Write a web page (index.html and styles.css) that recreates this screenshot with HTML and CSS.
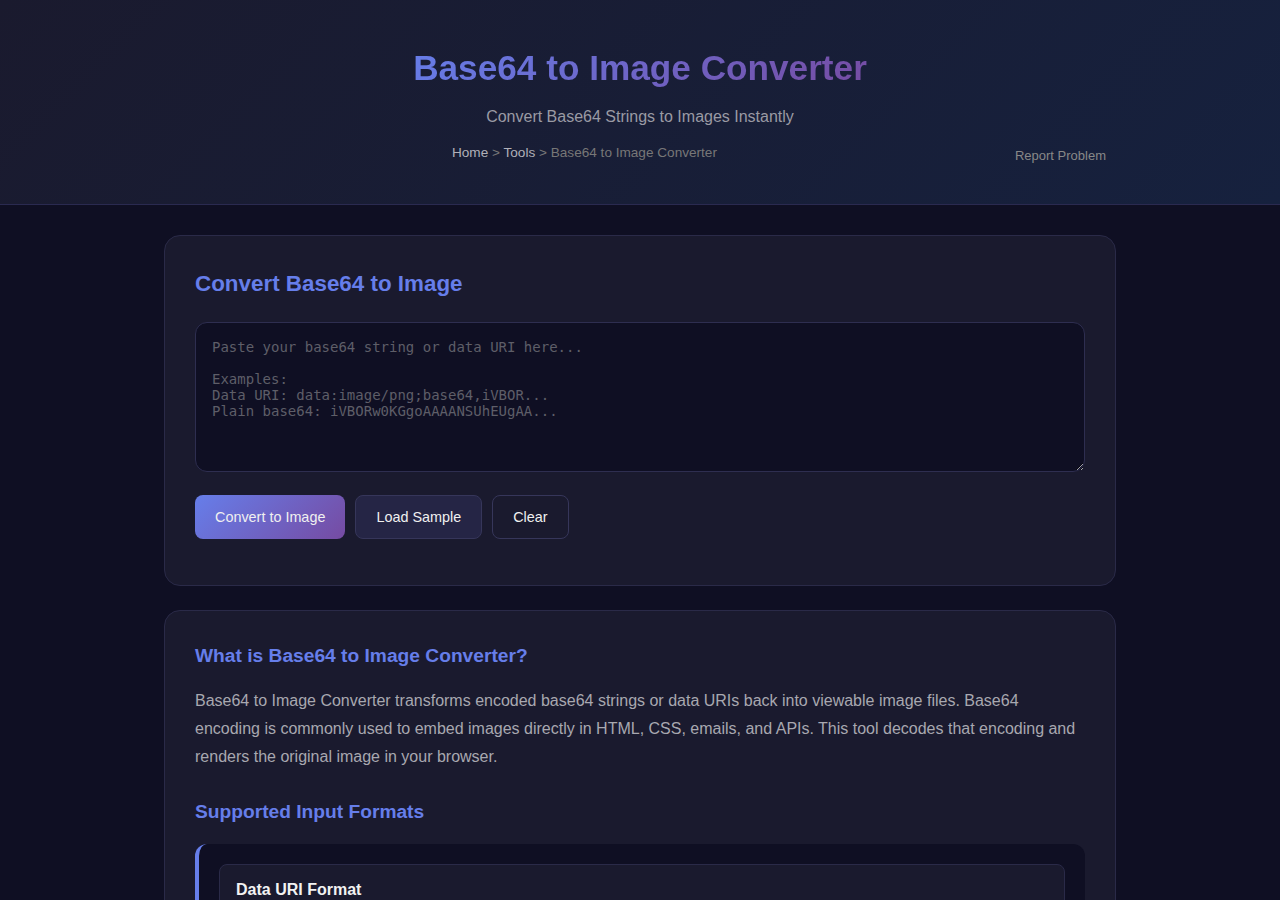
FILE: index.html
```html
<!DOCTYPE html>
<html lang="en">
<head>
  <meta charset="UTF-8">
  <meta name="viewport" content="width=device-width, initial-scale=1.0">
  <title>Base64 to Image Converter</title>
  <link rel="stylesheet" href="styles.css">
</head>
<body>
  <header class="site-header">
    <h1 class="title">Base64 to Image Converter</h1>
    <p class="subtitle">Convert Base64 Strings to Images Instantly</p>
    <div class="header-nav">
      <nav class="breadcrumb">
        <a href="#">Home</a> &gt; <a href="#">Tools</a> &gt; <span>Base64 to Image Converter</span>
      </nav>
      <a href="#" class="report-link">Report Problem</a>
    </div>
  </header>

  <main class="container">
    <section class="card">
      <h2 class="card-title">Convert Base64 to Image</h2>
      <textarea class="input-area" placeholder="Paste your base64 string or data URI here...

Examples:
Data URI: data:image/png;base64,iVBOR...
Plain base64: iVBORw0KGgoAAAANSUhEUgAA..."></textarea>
      <div class="btn-row">
        <button class="btn btn-primary">Convert to Image</button>
        <button class="btn btn-secondary">Load Sample</button>
        <button class="btn btn-outline">Clear</button>
      </div>
    </section>

    <section class="card">
      <h3 class="section-title">What is Base64 to Image Converter?</h3>
      <p class="section-text">Base64 to Image Converter transforms encoded base64 strings or data URIs back into viewable image files. Base64 encoding is commonly used to embed images directly in HTML, CSS, emails, and APIs. This tool decodes that encoding and renders the original image in your browser.</p>

      <h3 class="section-title formats-title">Supported Input Formats</h3>
      <div class="formats-box">
        <div class="format-item">
          <h4>Data URI Format</h4>
          <code>data:image/png;base64,iVBORw0KGgoAAAANSUhEUgAA...</code>
        </div>
        <div class="format-item">
          <h4>Plain Base64</h4>
          <code>iVBORw0KGgoAAAANSUhEUgAA...</code>
        </div>
      </div>
    </section>
  </main>
</body>
</html>
```

FILE: styles.css
```css
* {
  box-sizing: border-box;
}

body {
  margin: 0;
  font-family: 'Liberation Sans', Arial, sans-serif;
  background: #0f0f23;
  color: #e0e0e0;
  line-height: 1.6;
}

a {
  text-decoration: none;
}

.site-header {
  background: linear-gradient(135deg, #1a1a2e 0%, #16213e 100%);
  border-bottom: 1px solid #2a2a50;
  padding: 40px 20px 37px;
  text-align: center;
}

.title {
  margin: 0 0 8px;
  font-size: 2.2rem;
  font-weight: 700;
  background: linear-gradient(135deg, #667eea, #764ba2);
  -webkit-background-clip: text;
  background-clip: text;
  color: transparent;
  display: inline-block;
}

.subtitle {
  margin: 0 0 10px;
  font-size: 1rem;
  color: #9a9aa4;
}

.header-nav {
  max-width: 932px;
  margin: 0 auto;
  display: flex;
  align-items: center;
  gap: 20px;
}

.breadcrumb {
  flex: 1;
  text-align: center;
  font-size: 0.85rem;
  color: #777;
}

.breadcrumb a {
  color: #b0b0b8;
}

.report-link {
  font-size: 13px;
  color: #888;
  margin-top: 6px;
}

.container {
  max-width: 1000px;
  margin: 0 auto;
  padding: 30px 24px;
}

.card {
  background: #1a1a2e;
  border: 1px solid #2a2a48;
  border-radius: 16px;
  padding: 30px;
  margin-bottom: 24px;
}

.card-title {
  margin: 0 0 20px;
  font-size: 1.4rem;
  color: #667eea;
}

.input-area {
  display: block;
  width: 100%;
  height: 150px;
  padding: 16px;
  background: #0f0f23;
  border: 1px solid #2e2e50;
  border-radius: 12px;
  color: #ddd;
  font-family: 'DejaVu Sans Mono', monospace;
  font-size: 14px;
  line-height: 16px;
}

.input-area::placeholder {
  color: #5e5e68;
}

.btn-row {
  display: flex;
  gap: 10px;
  margin: 23px 0 16px;
}

.btn {
  font-family: inherit;
  font-size: 0.9rem;
  line-height: 18px;
  padding: 12px 20px;
  border-radius: 8px;
  border: 1px solid #36365a;
  color: #f0f0f0;
  cursor: pointer;
}

.btn-primary {
  background: linear-gradient(135deg, #667eea, #764ba2);
  border: none;
  padding: 13px 20px;
}

.btn-secondary {
  background: #252545;
}

.btn-outline {
  background: transparent;
}

.section-title {
  margin: 0 0 16px;
  font-size: 1.2rem;
  color: #667eea;
}

.section-text {
  margin: 0 0 26px;
  font-size: 1rem;
  line-height: 1.75;
  color: #a8a8b0;
}

.formats-title {
  margin-bottom: 16px;
}

.formats-box {
  background: #0f0f23;
  border-left: 4px solid #667eea;
  border-radius: 12px;
  padding: 20px;
  display: flex;
  flex-direction: column;
  gap: 12px;
}

.format-item {
  background: #1a1a2e;
  border: 1px solid #2a2a48;
  border-radius: 8px;
  padding: 15px 16px;
}

.format-item h4 {
  margin: 0 0 8px;
  font-size: 1rem;
  line-height: 1.3;
  color: #f2f2f2;
}

.format-item code {
  font-family: 'DejaVu Sans Mono', monospace;
  font-size: 13px;
  color: #9a9ab0;
}
```
